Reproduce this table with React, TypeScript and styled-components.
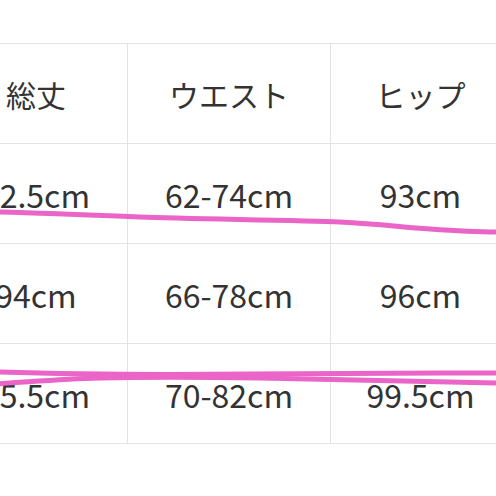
import * as React from "react";
import styled, { createGlobalStyle } from "styled-components";

const GlobalStyle = createGlobalStyle`
  html, body {
    margin: 0;
    padding: 0;
    background: #ffffff;
  }
`;

const Page = styled.div`
  position: relative;
  width: 496px;
  height: 496px;
  overflow: hidden;
  padding-top: 43px;
  box-sizing: border-box;
  background: #ffffff;
`;

const Table = styled.div`
  display: grid;
  grid-template-columns: 183px 203px 180px;
  margin-left: -55px;
  width: max-content;
  border-top: 1px solid #e3e3e3;
`;

const Cell = styled.div<{ $head?: boolean }>`
  height: 100px;
  box-sizing: border-box;
  display: flex;
  align-items: center;
  justify-content: center;
  border-right: 1px solid #e3e3e3;
  border-bottom: 1px solid #e3e3e3;
  font-family: "Noto Sans CJK JP", "Noto Sans", sans-serif;
  font-size: ${p => (p.$head ? "30px" : "32px")};
  color: #333333;
  white-space: nowrap;
`;

const Marker = styled.svg`
  position: absolute;
  left: 0;
  top: 0;
  width: 496px;
  height: 496px;
  pointer-events: none;
`;

const rows: string[][] = [
  ["総丈", "ウエスト", "ヒップ"],
  ["92.5cm", "62-74cm", "93cm"],
  ["94cm", "66-78cm", "96cm"],
  ["95.5cm", "70-82cm", "99.5cm"]
];

function App() {
  return (
    <React.Fragment>
      <GlobalStyle />
      <Page>
        <Table>
          {rows.map((row, i) =>
            row.map((text, j) => (
              <Cell key={`${i}-${j}`} $head={i === 0}>
                {text}
              </Cell>
            ))
          )}
        </Table>
        <Marker viewBox="0 0 496 496">
          <g fill="none" stroke="#ea5cc6" strokeWidth={5} strokeLinecap="round" opacity={0.95}>
            <path d="M-4 212 C 40 213, 90 215, 140 217 S 300 220, 340 222 S 400 227, 430 229 S 480 232, 500 232" />
            <path d="M-4 372 C 60 374, 150 375, 250 374 S 420 373, 500 373" />
            <path d="M-4 384 C 30 382, 60 379, 100 378 S 200 377, 260 378 S 430 382, 500 383" />
          </g>
        </Marker>
      </Page>
    </React.Fragment>
  );
}

export default App;
